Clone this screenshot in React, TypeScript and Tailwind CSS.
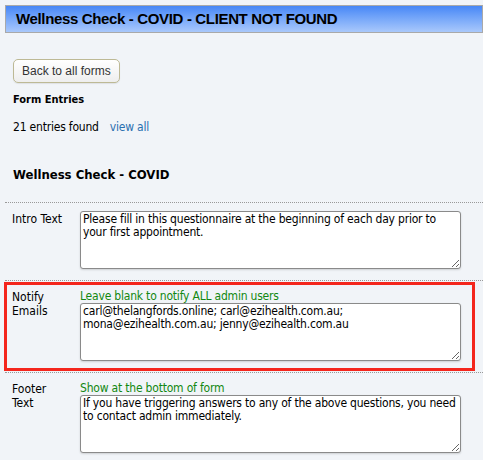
import React from "react";

type Field = {
  label: string[];
  hint?: string;
  value: string;
  flagged?: boolean;
};

const fields: Field[] = [
  {
    label: ["Intro Text"],
    value: "Please fill in this questionnaire at the beginning of each day prior to your first appointment.",
  },
  {
    label: ["Notify", "Emails"],
    hint: "Leave blank to notify ALL admin users",
    value: "carl@thelangfords.online; carl@ezihealth.com.au;\nmona@ezihealth.com.au; jenny@ezihealth.com.au",
    flagged: true,
  },
  {
    label: ["Footer", "Text"],
    hint: "Show at the bottom of form",
    value: "If you have triggering answers to any of the above questions, you need to contact admin immediately.",
  },
];

const body = "font-['Tahoma','DejaVu_Sans_Condensed','DejaVu_Sans',sans-serif]";

export default function App() {
  return (
    <div className={`min-h-screen bg-[#f1f4f8] pt-[5px] text-[12px] leading-[14px] tracking-[-0.2px] text-black ${body}`}>
      <div className="ml-[5px] flex h-[28px] items-center border border-[#a9a9a9] bg-gradient-to-b from-[#4787f6] to-[#a9c8fb] pl-[10px]">
        <h1 className="font-['Liberation_Sans',Arial,sans-serif] text-[15px] font-bold tracking-[-0.35px] text-black">
          Wellness Check - COVID - CLIENT NOT FOUND
        </h1>
      </div>

      <div className="px-[13px] pt-[26px]">
        <button className="h-[24px] rounded-[5px] border border-[#bdb995] bg-gradient-to-b from-white to-[#eeeeee] px-[8px] font-['Liberation_Sans',Arial,sans-serif] text-[12px] tracking-normal text-[#333] shadow-[0_1px_1px_rgba(0,0,0,0.08)]">
          Back to all forms
        </button>
        <p className="mt-[10px] text-[11px] font-bold tracking-normal">Form Entries</p>
        <p className="mt-[13px]">
          21 entries found
          <a className="ml-[11px] text-[#2a6fb0]" href="#">
            view all
          </a>
        </p>
        <h2 className="mt-[32px] text-[13px] font-bold leading-[17px] tracking-normal">Wellness Check - COVID</h2>
      </div>

      <div className="mt-[19px] ml-[5px]">
        {fields.map((field) => (
          <div
            key={field.label.join(" ")}
            className="relative flex border-t border-dotted border-[#999] pb-[11px] pt-[8px]"
          >
            <div className="w-[75px] shrink-0 pl-[7px] pt-[1px] tracking-normal">
              {field.label.map((line) => (
                <div key={line}>{line}</div>
              ))}
            </div>
            <div className="flex flex-col">
              {field.hint ? <p className="text-[#118811]">{field.hint}</p> : null}
              <textarea
                className={`h-[58px] w-[381px] rounded-[3px] border border-[#8a8a8a] bg-white py-[1px] pl-[2px] pr-0 text-[12px] leading-[13px] tracking-[-0.2px] text-black shadow-[0_1px_2px_rgba(0,0,0,0.15)] outline-none ${body}`}
                defaultValue={field.value}
              />
            </div>
            {field.flagged ? (
              <div className="pointer-events-none absolute top-px bottom-px left-[-1px] right-[8px] border-[3px] border-[#f4261d]" />
            ) : null}
          </div>
        ))}
      </div>
    </div>
  );
}
